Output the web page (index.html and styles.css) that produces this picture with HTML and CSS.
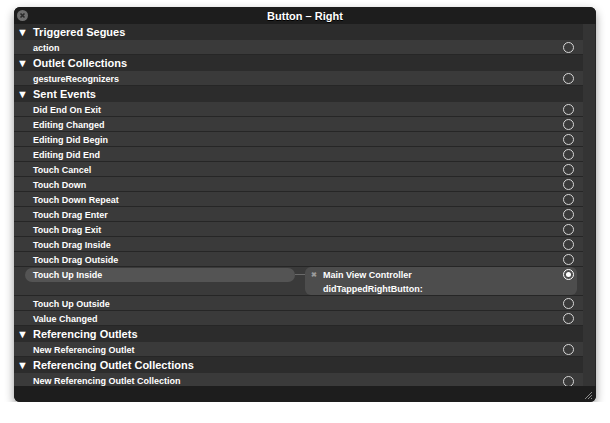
FILE: index.html
```html
<!DOCTYPE html>
<html>
<head>
<meta charset="utf-8">
<link rel="stylesheet" href="styles.css">
</head>
<body>
<div class="panel">
  <div class="titlebar">
    <span class="close"><svg width="11" height="11" viewBox="0 0 11 11"><circle cx="5.5" cy="5.5" r="5.5" fill="#6e6e6e"/><path d="M3.5 3.5 L7.5 7.5 M7.5 3.5 L3.5 7.5" stroke="#2a2a2a" stroke-width="1.6"/></svg></span>
    <span class="title">Button – Right</span>
  </div>
  <div class="body">
    <div class="list">
      <div class="head"><span class="tri">▼</span>Triggered Segues</div>
      <div class="item">action<span class="dot"></span></div>
      <div class="head"><span class="tri">▼</span>Outlet Collections</div>
      <div class="item">gestureRecognizers<span class="dot"></span></div>
      <div class="head"><span class="tri">▼</span>Sent Events</div>
      <div class="item">Did End On Exit<span class="dot"></span></div>
      <div class="item">Editing Changed<span class="dot"></span></div>
      <div class="item">Editing Did Begin<span class="dot"></span></div>
      <div class="item">Editing Did End<span class="dot"></span></div>
      <div class="item">Touch Cancel<span class="dot"></span></div>
      <div class="item">Touch Down<span class="dot"></span></div>
      <div class="item">Touch Down Repeat<span class="dot"></span></div>
      <div class="item">Touch Drag Enter<span class="dot"></span></div>
      <div class="item">Touch Drag Exit<span class="dot"></span></div>
      <div class="item">Touch Drag Inside<span class="dot"></span></div>
      <div class="item">Touch Drag Outside<span class="dot"></span></div>
      <div class="item connected">
        <div class="pill">Touch Up Inside</div>
        <div class="wire"></div>
        <div class="target">
          <span class="xmark">✖</span>
          <div class="tlines">
            <div>Main View Controller</div>
            <div>didTappedRightButton:</div>
          </div>
          <span class="dot on"></span>
        </div>
      </div>
      <div class="item">Touch Up Outside<span class="dot"></span></div>
      <div class="item">Value Changed<span class="dot"></span></div>
      <div class="head"><span class="tri">▼</span>Referencing Outlets</div>
      <div class="item">New Referencing Outlet<span class="dot"></span></div>
      <div class="head"><span class="tri">▼</span>Referencing Outlet Collections</div>
      <div class="item last">New Referencing Outlet Collection<span class="dot"></span></div>
    </div>
    <div class="scroller"></div>
  </div>
  <div class="footer">
    <svg class="grip" width="9" height="9" viewBox="0 0 9 9"><path d="M1 8 L8 1 M4 8 L8 4 M7 8 L8 7" stroke="#8a8a8a" stroke-width="1"/></svg>
  </div>
</div>
</body>
</html>
```
FILE: styles.css
```css
html, body {
  margin: 0;
  padding: 0;
  background: #ffffff;
}
body {
  padding: 7px 0 0 14px;
  font-family: "Liberation Sans", Arial, sans-serif;
  color: #ffffff;
}
.panel {
  width: 582px;
  height: 395px;
  background: #1d1d1d;
  border-radius: 6px;
  box-shadow: 0 4px 10px rgba(0, 0, 0, 0.4);
  display: flex;
  flex-direction: column;
  overflow: hidden;
}
.titlebar {
  height: 17px;
  flex: none;
  display: flex;
  align-items: center;
  justify-content: center;
  position: relative;
  background: #1d1d1d;
}
.close {
  position: absolute;
  left: 3px;
  top: 3px;
  width: 11px;
  height: 11px;
  display: block;
}
.close svg { display: block; }
.title {
  font-weight: bold;
  font-size: 11px;
  text-shadow: 0 1px 0 #000;
}
.body {
  flex: 1;
  display: flex;
  min-height: 0;
}
.list {
  flex: 1;
  display: flex;
  flex-direction: column;
}
.scroller {
  width: 12px;
  flex: none;
  background: #343434;
  border-right: 1px solid #262626;
}
.head {
  height: 16px;
  flex: none;
  background: #2c2c2c;
  display: flex;
  align-items: center;
  font-weight: bold;
  font-size: 11px;
  padding-left: 3px;
  box-sizing: border-box;
}
.tri {
  font-size: 11px;
  width: 16px;
  display: inline-block;
}
.item {
  height: 15px;
  flex: none;
  box-sizing: border-box;
  background: #3a3a3a;
  border-bottom: 1px solid #262626;
  display: flex;
  align-items: center;
  padding-left: 19px;
  padding-top: 1px;
  font-weight: bold;
  font-size: 9px;
}
.item.last { border-bottom: none; }
.dot {
  margin-left: auto;
  margin-right: 9px;
  width: 11px;
  height: 11px;
  box-sizing: border-box;
  border: 1.5px solid #d6d6d6;
  border-radius: 50%;
  flex: none;
}
.dot.on {
  position: relative;
  margin-right: 3px;
  margin-top: 1px;
  align-self: flex-start;
  border-color: #ffffff;
}
.dot.on::after {
  content: "";
  position: absolute;
  left: 1.5px;
  top: 1.5px;
  width: 5px;
  height: 5px;
  border-radius: 50%;
  background: #ffffff;
}
.connected {
  height: 29px;
  align-items: flex-start;
  padding-left: 11px;
  padding-top: 0;
}
.pill {
  width: 270px;
  height: 14px;
  margin-top: 1px;
  box-sizing: border-box;
  background: #545454;
  border-radius: 7px;
  padding-left: 8px;
  line-height: 14px;
  flex: none;
}
.wire {
  width: 10px;
  height: 1px;
  margin-top: 7px;
  background: #6a6a6a;
  flex: none;
}
.target {
  width: 272px;
  height: 28px;
  box-sizing: border-box;
  background: #4d4d4d;
  border-radius: 6px;
  display: flex;
  align-items: flex-start;
  padding-top: 1px;
  flex: none;
}
.xmark {
  font-size: 7px;
  color: #9a9a9a;
  width: 18px;
  text-align: center;
  line-height: 13px;
}
.tlines {
  display: flex;
  flex-direction: column;
  line-height: 14px;
}
.footer {
  height: 14px;
  flex: none;
  background: #1d1d1d;
  display: flex;
  justify-content: flex-end;
  align-items: flex-end;
  padding: 0 3px 2px 0;
}
.grip { display: block; }
```
